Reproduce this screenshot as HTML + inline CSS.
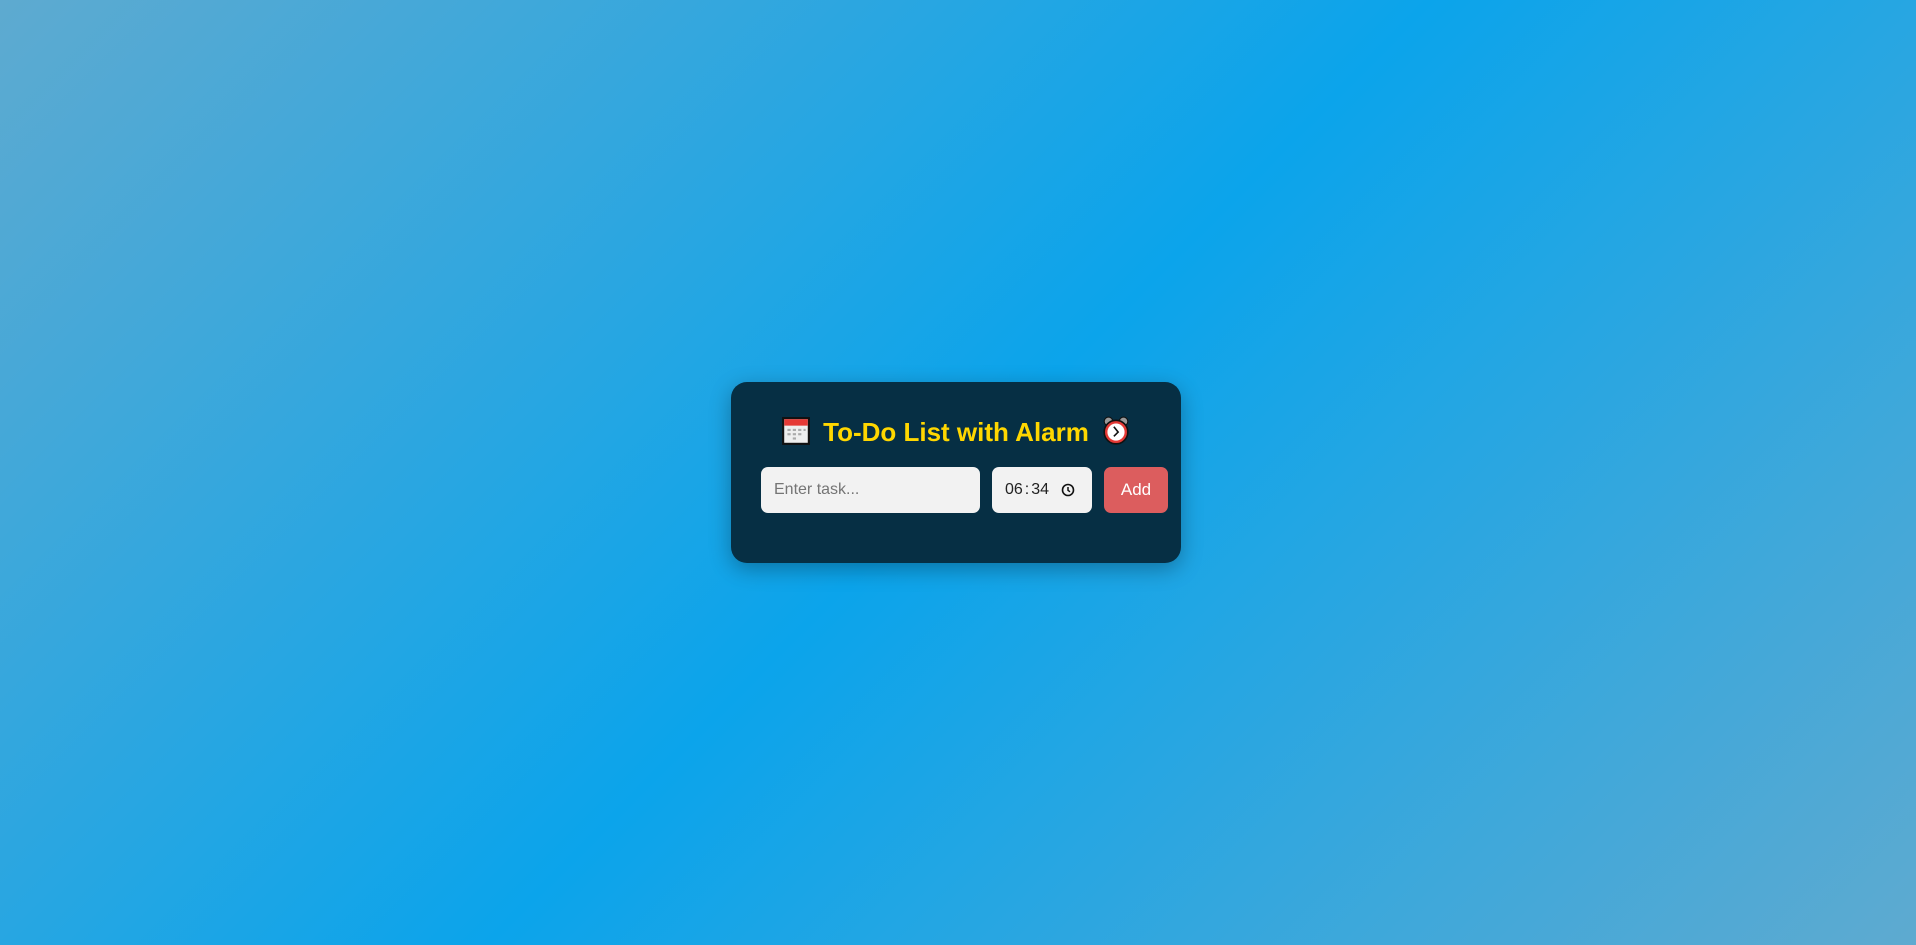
<!DOCTYPE html>
<html><head><style>
html,body{margin:0;height:945px;width:1916px;overflow:hidden}
body{background:linear-gradient(135deg,#5eaad0 0%,#0ba4eb 50%,#5eaad0 100%);font-family:"Liberation Sans",Arial,sans-serif;position:relative}
.card{position:absolute;left:731px;top:382px;width:450px;height:181px;background:#062f44;border-radius:16px;box-shadow:0 6px 22px rgba(0,0,0,.3)}
h2{position:absolute;left:0;width:450px;top:416px;margin:0;text-align:center;color:#ffd700;font-size:26px;font-weight:bold;white-space:nowrap}
.emo{display:inline-block;width:30px;height:30px;vertical-align:-5px;line-height:30px}
.in{position:absolute;top:467px;height:46px;background:#f2f2f2;border-radius:7px;font-size:16px;line-height:46px}
.btn{position:absolute;top:467px;left:1104px;width:64px;height:46px;background:#dc5d5e;border-radius:7px;color:#fff;font-size:17px;line-height:46px;text-align:center}
</style></head><body>
<div class="card"></div>
<h2 style="left:731px"><span class="emo" style="margin-right:5px">
<svg width="30" height="30" viewBox="0 0 28 28"><rect x="1" y="1" width="26" height="26" fill="#111"/><rect x="3" y="3" width="22" height="22" fill="#eee"/><rect x="3" y="3" width="22" height="6" fill="#e53935"/><g fill="#aaa"><rect x="6" y="12" width="3" height="2"/><rect x="11" y="12" width="3" height="2"/><rect x="16" y="12" width="3" height="2"/><rect x="21" y="12" width="2" height="2"/><rect x="6" y="16" width="3" height="2"/><rect x="11" y="16" width="3" height="2"/><rect x="16" y="16" width="3" height="2"/><rect x="11" y="20" width="3" height="2"/></g></svg></span>&nbsp;To-Do List with Alarm&nbsp;<span class="emo" style="margin-left:5px"><svg width="30" height="30" viewBox="0 0 28 28"><circle cx="7" cy="5" r="4" fill="#999" stroke="#111"/><circle cx="21" cy="5" r="4" fill="#999" stroke="#111"/><circle cx="14" cy="15" r="11" fill="#e53935" stroke="#111" stroke-width="1.5"/><circle cx="14" cy="15" r="8" fill="#fff"/><path d="M12 10l4 5-4 4" stroke="#111" stroke-width="1.5" fill="none"/></svg></span></h2>
<div class="in" style="left:761px;width:219px"><span style="margin-left:13px;color:#757575">Enter task...</span></div>
<div class="in" style="left:992px;width:100px"><span style="margin-left:13px;color:#222">06<span style="margin:0 2px">:</span>34</span>
<svg style="position:absolute;left:69px;top:16px" width="14" height="14" viewBox="0 0 14 14"><circle cx="7" cy="7" r="5.5" fill="none" stroke="#111" stroke-width="1.6"/><path d="M7 4v3.3l2 1.5" stroke="#111" stroke-width="1.5" fill="none"/></svg></div>
<div class="btn">Add</div>
</body></html>
